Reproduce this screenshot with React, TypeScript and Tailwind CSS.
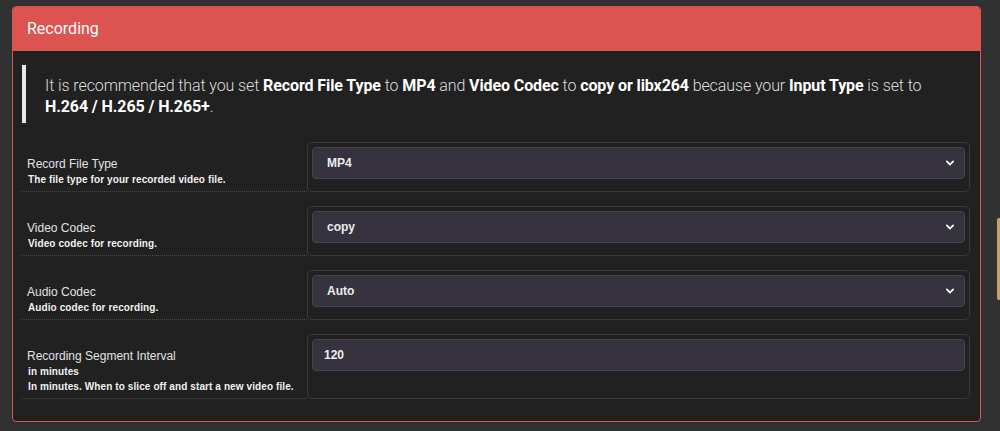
const rows = [
  { label: "Record File Type", notes: ["The file type for your recorded video file."], value: "MP4", kind: "select" },
  { label: "Video Codec", notes: ["Video codec for recording."], value: "copy", kind: "select" },
  { label: "Audio Codec", notes: ["Audio codec for recording."], value: "Auto", kind: "select" },
  {
    label: "Recording Segment Interval",
    notes: ["in minutes", "In minutes. When to slice off and start a new video file."],
    value: "120",
    kind: "input"
  }
];

export default function App() {
  return (
    <div className="relative min-h-screen bg-[#313131] pt-[6px] pb-[10px]">
      <div className="ml-[12px] w-[969px] overflow-hidden rounded-[4px] border border-[#d9534f] bg-[#212121]">
        <div className="flex h-[44px] items-center bg-[#db5450] px-[14px] font-['Roboto',sans-serif] text-[16px] text-white">
          Recording
        </div>

        <div className="px-[9px] pt-[14px] pb-[22px]">
          <div className="flex border-l-[4px] border-[#e8e8e8] pt-[10px] pb-[6px] pl-[19px] pr-[30px] font-['Roboto',sans-serif] text-[16px] leading-[21px] font-light tracking-[-0.1px] text-[#dedede]">
            <p>
              It is recommended that you set <b className="font-bold text-white">Record File Type</b> to{" "}
              <b className="font-bold text-white">MP4</b> and <b className="font-bold text-white">Video Codec</b> to{" "}
              <b className="font-bold text-white">copy or libx264</b> because your{" "}
              <b className="font-bold text-white">Input Type</b> is set to{" "}
              <b className="font-bold text-white">H.264 / H.265 / H.265+</b>.
            </p>
          </div>

          <div className="mt-[19px] flex flex-col gap-[14px]">
            {rows.map((row) => (
              <SettingRow key={row.label} {...row} />
            ))}
          </div>
        </div>
      </div>

      {/* tab peeking in from the right edge */}
      <div className="absolute right-0 top-[218px] h-[82px] w-[3px] rounded-l-[2px] bg-[#c9a066]" />
    </div>
  );
}

function SettingRow({ label, notes, value, kind }: { label: string; notes: string[]; value: string; kind: string }) {
  return (
    <div className="flex">
      <div className="w-[285px] border-b border-dotted border-[#4a4a4a] pt-[14px] pb-[4px] pl-[5px] font-['Liberation_Sans',Arial,sans-serif]">
        <div className="text-[12px] leading-[16px] text-[#e2e2e2]">{label}</div>
        {notes.map((n) => (
          <div key={n} className="pl-[1px] text-[10px] leading-[15px] font-bold tracking-[0.1px] text-[#f0f0f0]">
            {n}
          </div>
        ))}
      </div>
      <div className="w-[663px] rounded-[5px] border border-[#3a3a3a] px-[4px] pt-[4px] pb-[11px]">
        <div className="flex h-[32px] items-center rounded-[4px] border border-[#46434f] bg-[#36333f] font-['Liberation_Sans',Arial,sans-serif] text-[12px] font-bold text-[#ececec]">
          {kind === "select" ? (
            <>
              <span className="flex-1 pl-[14px]">{value}</span>
              <svg className="mr-[9px] h-[10px] w-[10px]" viewBox="0 0 16 16" fill="none" stroke="#f2f2f2" strokeWidth={3} strokeLinecap="round" strokeLinejoin="round">
                <path d="M3 5.5l5 5 5-5" />
              </svg>
            </>
          ) : (
            <span className="pl-[11px]">{value}</span>
          )}
        </div>
      </div>
    </div>
  );
}
